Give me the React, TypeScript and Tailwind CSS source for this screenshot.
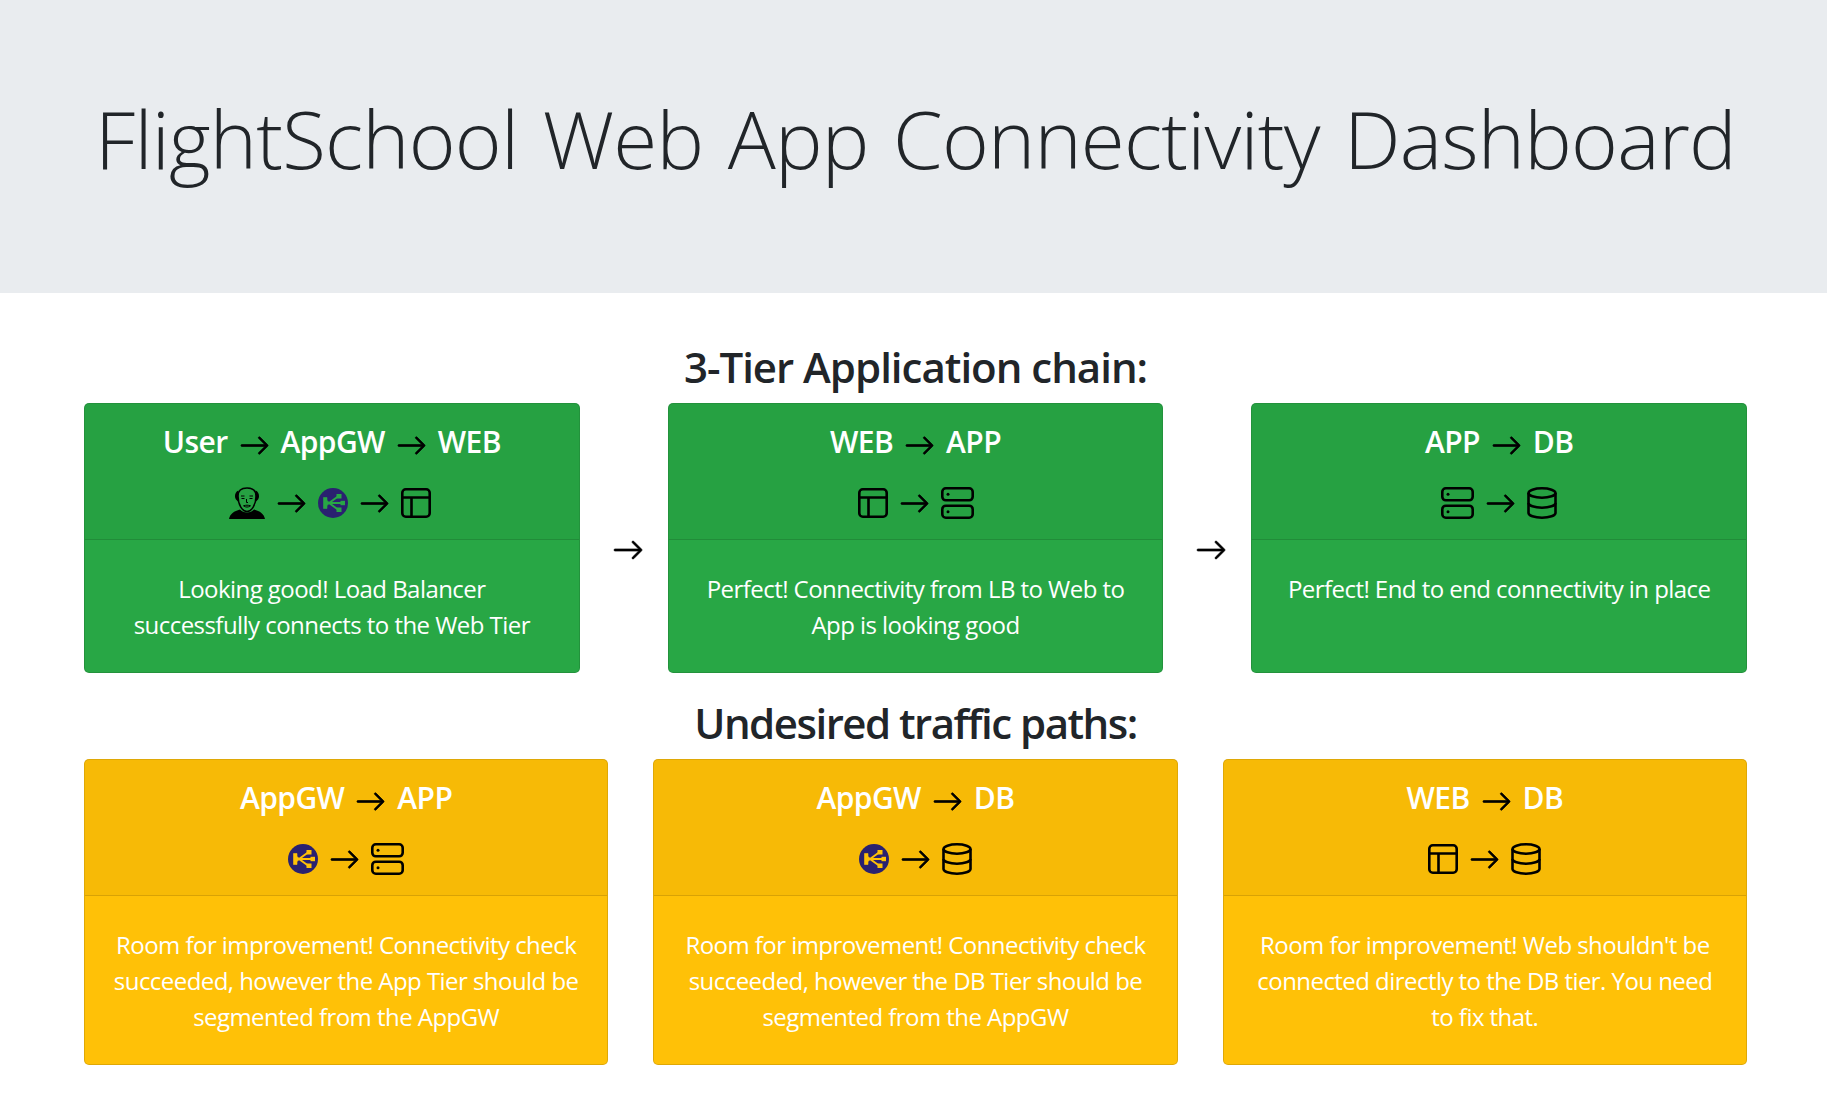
const Arrow = ({ s = 31, className = "" }: { s?: number; className?: string }) => (
  <svg width={s} height={s} viewBox="0 0 16 16" fill="black" stroke="black" strokeWidth="0.35" className={`block shrink-0 ${className}`}>
    <path fillRule="evenodd" d="M1 8a.5.5 0 0 1 .5-.5h11.793l-3.147-3.146a.5.5 0 0 1 .708-.708l4 4a.5.5 0 0 1 0 .708l-4 4a.5.5 0 0 1-.708-.708L13.293 8.5H1.5A.5.5 0 0 1 1 8z" />
  </svg>
);

const Layout = () => (
  <svg width="30" height="30" viewBox="0 0 30 30" fill="none" stroke="black" strokeWidth="2.6" className="block">
    <rect x="1.3" y="1.3" width="27.4" height="27.4" rx="3.5" />
    <path d="M1.3 9.5H28.7M10.5 9.5V28.7" />
  </svg>
);

const Server = () => (
  <svg width="33" height="32" viewBox="0 0 33 32" fill="none" stroke="black" strokeWidth="2.6" className="block">
    <rect x="1.3" y="1.3" width="30.4" height="12" rx="3.5" />
    <rect x="1.3" y="18.7" width="30.4" height="12" rx="3.5" />
    <circle cx="7" cy="7.3" r="1.5" fill="black" stroke="none" />
    <circle cx="7" cy="24.7" r="1.5" fill="black" stroke="none" />
  </svg>
);

const Db = () => (
  <svg width="30" height="32" viewBox="0 0 30 32" fill="none" stroke="black" strokeWidth="2.6" className="block">
    <ellipse cx="15" cy="6" rx="13.5" ry="4.7" />
    <path d="M1.5 6V26C1.5 28.6 7.5 30.7 15 30.7S28.5 28.6 28.5 26V6" />
    <path d="M1.5 16C1.5 18.6 7.5 20.7 15 20.7S28.5 18.6 28.5 16" />
  </svg>
);

const Gw = ({ c }: { c: string }) => (
  <svg width="30" height="30" viewBox="0 0 30 30" className="block">
    <circle cx="15" cy="15" r="15" fill="#2a2170" />
    <g fill={c} stroke={c}>
      <path d="M5.5 9.5H9V12.5L12 15L9 17.5V20.5H5.5Z" strokeWidth="0.6" />
      <path d="M11 15H24M11 15L20 8.5M11 15L20 21.5" fill="none" strokeWidth="2" />
      <rect x="18.5" y="6" width="5" height="4.5" strokeWidth="0" />
      <rect x="22.5" y="12.8" width="4.5" height="4.4" strokeWidth="0" />
      <rect x="18.5" y="19.5" width="5" height="4.5" strokeWidth="0" />
    </g>
  </svg>
);

const Person = () => (
  <svg width="36" height="32" viewBox="0 0 36 32" className="block">
    <path d="M0 32C1 27 5 24 11 22.5C14 26.5 22 26.5 25 22.5C31 24 35 27 36 32Z" fill="black" />
    <path d="M9 9C9 3 13 1 18 1C23 1 27 3 27 9C27 18 22.5 24.5 18 24.5C13.5 24.5 9 18 9 9Z" fill="none" stroke="black" strokeWidth="1.5" />
    <path d="M9.5 3.5C6 4.5 5 10 7 12.5L9.5 15C9 11 9 7 9.5 3.5ZM26.5 3.5C30 4.5 31 10 29 12.5L26.5 15C27 11 27 7 26.5 3.5Z" fill="black" />
    <path d="M12 9H15.5M20.5 9H24M12.5 11.5H15.5M20.5 11.5H23.5M17.5 12V15.5H19M14.5 18.8C17 18 19 18 21.5 18.8C19 20.5 17 20.5 14.5 18.8" fill="none" stroke="black" strokeWidth="1" />
  </svg>
);

const Title = ({ parts }: { parts: string[] }) => (
  <h3 className="m-0 text-center text-[30px] leading-[34px] font-semibold text-white flex justify-center items-center gap-[11px] tracking-[-0.6px]">
    {parts.map((p, i) => (
      <span key={i} className="flex items-center gap-[11px]">
        {i > 0 && <Arrow className="mt-[8px]" />}
        {p}
      </span>
    ))}
  </h3>
);

const IconRow = ({ icons, wide }: { icons: React.ReactNode[]; wide?: boolean }) => (
  <div className={`flex justify-center items-center gap-[11px] mt-[26px] ${wide ? "pr-[3px]" : ""}`}>
    {icons.map((ic, i) => (
      <span key={i} className="flex items-center gap-[11px]">
        {i > 0 && <Arrow />}
        {ic}
      </span>
    ))}
  </div>
);

const Card = ({ bg, parts, icons, children, h }: { bg: string; parts: string[]; icons: React.ReactNode[]; children: React.ReactNode; h: string }) => (
  <div className={`flex-1 min-w-0 rounded-[5px] border border-black/[.125] text-white ${bg} ${h}`}>
    <div className="border-b border-black/[.125] bg-black/[.03] px-5 pt-[18px] h-[136px]">
      <Title parts={parts} />
      <IconRow icons={icons} wide={icons.length > 2} />
    </div>
    <div className="px-5 pt-[31px] text-center text-[24px] leading-[36px] font-normal tracking-[-0.55px]">{children}</div>
  </div>
);

const G = "bg-[#28a745]";
const Y = "bg-[#ffc107]";

const Sep = () => (
  <div className="w-[88px] shrink-0 flex items-center justify-center pt-[24px] pl-[8px]"><Arrow s={32} /></div>
);

const H2 = "m-0 text-center text-[42px] leading-[48px] font-semibold";

export default function App() {
  return (
    <div className="min-h-[1102px] bg-white text-[#212529] font-['Open_Sans','Noto_Sans',sans-serif]">
      <header className="h-[293px] bg-[#e9ecef] flex items-center justify-center pl-[4px]">
        <h1 className="m-0 text-[80px] leading-[96px] font-light text-center tracking-[-0.8px] [word-spacing:4.5px] mt-[-18px]">FlightSchool Web App Connectivity Dashboard</h1>
      </header>
      <main className="pl-[84px] pr-[80px]">
        <h2 className={`${H2} tracking-[-1px] mt-[50px] h-[60px]`}>3-Tier Application chain:</h2>
        <div className="flex">
          <Card bg={G} h="h-[270px]" parts={["User", "AppGW", "WEB"]} icons={[<Person />, <Gw c="#28a745" />, <Layout />]}>Looking good! Load Balancer<br />successfully connects to the Web Tier</Card>
          <Sep />
          <Card bg={G} h="h-[270px]" parts={["WEB", "APP"]} icons={[<Layout />, <Server />]}>Perfect! Connectivity from LB to Web to App is looking good</Card>
          <Sep />
          <Card bg={G} h="h-[270px]" parts={["APP", "DB"]} icons={[<Server />, <Db />]}>Perfect! End to end connectivity in place</Card>
        </div>
        <h2 className={`${H2} tracking-[-1.5px] mt-[26px] h-[60px]`}>Undesired traffic paths:</h2>
        <div className="flex gap-[45px]">
          <Card bg={Y} h="h-[306px]" parts={["AppGW", "APP"]} icons={[<Gw c="#ffc107" />, <Server />]}>Room for improvement! Connectivity check succeeded, however the App Tier should be segmented from the AppGW</Card>
          <Card bg={Y} h="h-[306px]" parts={["AppGW", "DB"]} icons={[<Gw c="#ffc107" />, <Db />]}>Room for improvement! Connectivity check succeeded, however the DB Tier should be segmented from the AppGW</Card>
          <Card bg={Y} h="h-[306px]" parts={["WEB", "DB"]} icons={[<Layout />, <Db />]}>Room for improvement! Web shouldn't be connected directly to the DB tier. You need to fix that.</Card>
        </div>
      </main>
    </div>
  );
}
